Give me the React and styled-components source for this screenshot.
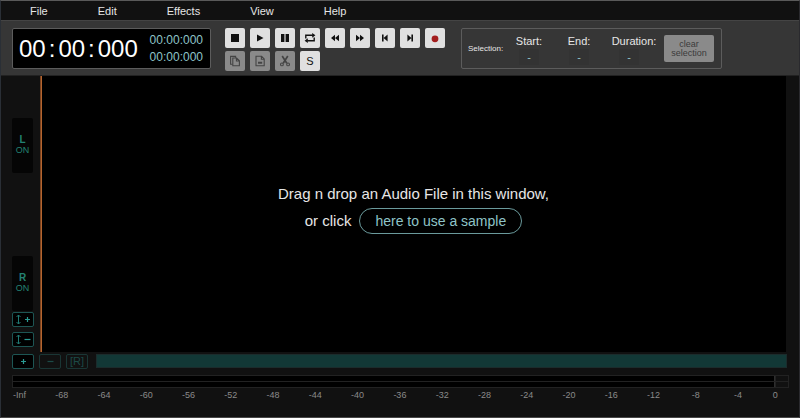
import React from "react";
import styled, { createGlobalStyle } from "styled-components";

const colors = {
  black: "#000",
  panel: "#111",
  toolbar: "#363636",
  edge: "#5c5c5c",
  text: "#e6e6e6",
  aqua: "#8fc4c8",
  teal: "#238272",
  tealEdge: "#1d5553",
  wave: "#123836",
  cursor: "#b5652f",
  key: "#e0e0e0",
  keyOff: "#8a8a8a",
};

const GlobalStyle = createGlobalStyle`
  * {
    box-sizing: border-box;
  }

  body {
    margin: 0;
    background: ${colors.panel};
    color: ${colors.text};
    font-family: "Liberation Sans", Arial, sans-serif;
    font-size: 11px;
  }

  button {
    border: none;
    cursor: pointer;
    font-family: inherit;
    padding: 0;
  }
`;

const Editor = styled.div`
  border: 1px solid #484848;
  border-left-color: #2a2f36;
  border-right-color: #2a2a2e;
  border-top-color: #5a5a5a;
  display: flex;
  flex-direction: column;
  min-height: 100vh;
`;

const MenuBar = styled.nav`
  display: flex;
  height: 19px;
  padding: 0 4px;
`;

const MenuButton = styled.button`
  background: none;
  color: ${colors.text};
  font-size: 11px;
  padding: 0 25px;
`;

const Toolbar = styled.header`
  align-items: flex-start;
  background: ${colors.toolbar};
  border-bottom: 1px solid #222;
  border-top: 1px solid #444;
  display: flex;
  height: 56px;
  padding: 7px 11px 0;
`;

const Clock = styled.div`
  align-items: center;
  background: ${colors.black};
  border: 1px solid ${colors.edge};
  border-radius: 2px;
  display: flex;
  height: 41px;
  justify-content: space-between;
  padding: 0 7px 0 6px;
  width: 199px;
`;

const BigTime = styled.div`
  color: #fff;
  display: flex;
  font-size: 24px;
  gap: 3px;
  line-height: 36px;
`;

const SmallTimes = styled.div`
  color: ${colors.aqua};
  font-size: 12px;
  line-height: 17px;
`;

const Keys = styled.div`
  display: grid;
  gap: 3px 5px;
  grid-template-columns: repeat(9, 20px);
  margin-left: 14px;
`;

const Key = styled.button`
  align-items: center;
  background: ${colors.key};
  border-radius: 2px;
  color: #111;
  display: flex;
  font-size: 11px;
  height: 20px;
  justify-content: center;

  &:disabled {
    background: ${colors.keyOff};
    color: #444;
  }
`;

const Selection = styled.section`
  align-items: center;
  border: 1px solid ${colors.edge};
  border-radius: 2px;
  display: flex;
  height: 41px;
  margin-left: 16px;
  padding: 0 7px 0 6px;
`;

const SelectionTitle = styled.span`
  font-size: 8px;
  width: 36px;
`;

const Readout = styled.label`
  align-items: center;
  display: flex;
  flex-direction: column;
  line-height: 16px;
  width: 50px;

  &:last-of-type {
    width: 60px;

    output {
      margin-right: 10px;
    }
  }
`;

const Value = styled.output`
  background: #333;
  color: ${colors.aqua};
  text-align: center;
  width: 20px;
`;

const ClearButton = styled.button`
  background: ${colors.keyOff};
  border-radius: 2px;
  color: #3a3a3a;
  font-size: 9px;
  height: 27px;
  line-height: 9px;
  width: 50px;

  span {
    display: block;
  }
`;

const Main = styled.main`
  display: flex;
  flex: 1;
  padding-right: 13px;
`;

const Channels = styled.aside`
  display: flex;
  flex-direction: column;
  padding-left: 11px;
  width: 39px;
`;

const Channel = styled.div`
  display: grid;
  flex: 1;
  grid-template-rows: 1fr 55px 1fr;
`;

const ChannelButton = styled.button`
  background: #050505;
  border-radius: 2px;
  color: ${colors.teal};
  font-size: 9px;
  grid-row: 2;
  line-height: 11px;
  width: 21px;
`;

const ChannelName = styled.span`
  display: block;
  font-size: 10px;
  font-weight: bold;
`;

const ZoomStack = styled.div`
  display: flex;
  flex-direction: column;
  gap: 5px;
  grid-row: 3;
  padding-top: 1px;
`;

const ZoomButton = styled.button`
  align-items: center;
  background: ${colors.black};
  border: 1px solid ${colors.tealEdge};
  border-radius: 2px;
  color: #2a9a92;
  display: flex;
  font-size: 11px;
  gap: 2px;
  height: 15px;
  justify-content: center;
  line-height: 11px;
  width: 22px;

  &:disabled {
    background: none;
    border-color: #1a3635;
    color: #1c4a47;
  }
`;

const Canvas = styled.section`
  align-items: center;
  background: ${colors.black};
  border-left: 1px solid #7a4320;
  box-shadow: inset 1px 0 ${colors.cursor};
  display: flex;
  flex: 1;
  flex-direction: column;
  font-size: 15px;
  justify-content: center;
  line-height: 27px;
  padding-bottom: 14px;
`;

const DropLine = styled.div`
  align-items: center;
  display: flex;
  gap: 8px;
`;

const SampleButton = styled.button`
  background: none;
  border: 1px solid #6a9a9c;
  border-radius: 13px;
  color: ${colors.aqua};
  font-size: 14px;
  height: 26px;
  padding: 0 15px;
`;

const Footer = styled.footer`
  padding: 2px 10px 17px 11px;
`;

const Timeline = styled.div`
  display: flex;
  gap: 5px;
`;

const Scrollbar = styled.div`
  background: ${colors.wave};
  border: 1px solid #1b2c2c;
  flex: 1;
  height: 14px;
  margin: 0 2px 0 3px;
`;

const Meter = styled.div`
  background: #222;
  display: grid;
  gap: 1px;
  grid-template-columns: 1fr 12px;
  margin-top: 6px;
  padding: 1px;
`;

const Level = styled.div`
  background: ${colors.black};
  border-right: 1px solid #2e2e2e;
  height: 5px;
`;

const Clip = styled.div`
  background: ${colors.panel};
  height: 5px;
`;

const Scale = styled.div`
  color: #8a8a8a;
  display: flex;
  font-size: 9px;
  justify-content: space-between;
  line-height: 10px;
  margin: 2px 11px 0 0;
`;

const Tick = styled.span`
  text-align: center;
  width: 15px;

  &:last-child {
    width: 5px;
  }
`;

const Icon = ({ children }) => (
  <svg width="12" height="12" viewBox="0 0 12 12" fill="currentColor" aria-hidden="true">
    {children}
  </svg>
);

const line = { fill: "none", stroke: "currentColor", strokeWidth: 1.1 };

const icons = {
  stop: <path d="M2 2h8v8H2z" />,
  play: <path d="M3 2.5L9.5 6 3 9.5z" />,
  pause: <path d="M2 2h3.4v8H2zM6.6 2H10v8H6.6z" />,
  loop: (
    <>
      <path {...line} strokeWidth="1.4" d="M1.8 6.6V3.3h7M10.2 5.4v3.3h-7" />
      <path d="M8.2.9l3.2 2.4-3.2 2.4zM3.8 6.3L.6 8.7l3.2 2.4z" />
    </>
  ),
  rewind: <path d="M6 2.7v6.6L2 6zM10 2.7v6.6L6 6z" />,
  forward: <path d="M2 2.7v6.6L6 6zM6 2.7v6.6L10 6z" />,
  start: <path d="M3 2.4h1.6v7.2H3zM8.6 2.4v7.2L4.6 6z" />,
  end: <path d="M7.4 2.4H9v7.2H7.4zM3.4 2.4v7.2l4-3.6z" />,
  record: <circle cx="6" cy="6.8" r="3.4" fill="#a31d1d" />,
  copy: (
    <>
      <path {...line} d="M3.6 9.2H1.6V1.4h5v1.4" />
      <path {...line} d="M3.8 3h3.8l2.8 2.8v5H3.8zM7.4 3.2V6h2.8" />
    </>
  ),
  paste: <path {...line} d="M2 1.2h5.6L10.2 4v6.8H2zM7.4 1.4v2.8h2.6M4 7.2h4.2M4 8.2h4.2" />,
  cut: (
    <g {...line}>
      <path d="M3.2 1l4.6 7.2M8.8 1L4.2 8.2" strokeWidth="1.7" />
      <circle cx="2.9" cy="9.4" r="1.4" />
      <circle cx="9.1" cy="9.4" r="1.4" />
    </g>
  ),
};

const menus = ["File", "Edit", "Effects", "View", "Help"];

const transport = ["stop", "play", "pause", "loop", "rewind", "forward", "start", "end", "record"];

const clipboard = ["copy", "paste", "cut"];

const ticks = ["-Inf"];
for (let db = -68; db <= 0; db += 4) {
  ticks.push(String(db));
}

const VerticalArrow = () => (
  <svg width="7" height="11" viewBox="0 0 7 11" fill="none" stroke="#1f7a74" aria-hidden="true">
    <path d="M3.5 1v9M1.5 3l2-2 2 2M1.5 8l2 2 2-2" />
  </svg>
);

const Sign = ({ plus }) => (
  <svg width="7" height="7" viewBox="0 0 7 7" fill="none" stroke="currentColor" strokeWidth="1.2" aria-hidden="true">
    <path d={plus ? "M1 3.5h5M3.5 1v5" : "M0.5 3.5h6"} />
  </svg>
);

const App = () => (
  <>
    <GlobalStyle />
    <Editor>
      <MenuBar>
        {menus.map((name) => (
          <MenuButton key={name}>{name}</MenuButton>
        ))}
      </MenuBar>
      <Toolbar>
        <Clock>
          <BigTime>
            <span>00</span>
            <span>:</span>
            <span>00</span>
            <span>:</span>
            <span>000</span>
          </BigTime>
          <SmallTimes>
            <div>00:00:000</div>
            <div>00:00:000</div>
          </SmallTimes>
        </Clock>
        <Keys>
          {transport.map((name) => (
            <Key key={name} aria-label={name}>
              <Icon>{icons[name]}</Icon>
            </Key>
          ))}
          {clipboard.map((name) => (
            <Key key={name} aria-label={name} disabled>
              <Icon>{icons[name]}</Icon>
            </Key>
          ))}
          <Key>S</Key>
        </Keys>
        <Selection>
          <SelectionTitle>Selection:</SelectionTitle>
          <Readout>
            Start:
            <Value>-</Value>
          </Readout>
          <Readout>
            End:
            <Value>-</Value>
          </Readout>
          <Readout>
            Duration:
            <Value>-</Value>
          </Readout>
          <ClearButton disabled>
            <span>clear</span>
            <span>selection</span>
          </ClearButton>
        </Selection>
      </Toolbar>
      <Main>
        <Channels>
          <Channel>
            <ChannelButton>
              <ChannelName>L</ChannelName>
              ON
            </ChannelButton>
          </Channel>
          <Channel>
            <ChannelButton>
              <ChannelName>R</ChannelName>
              ON
            </ChannelButton>
            <ZoomStack>
              <ZoomButton aria-label="Zoom in vertically">
                <VerticalArrow />
                <Sign plus />
              </ZoomButton>
              <ZoomButton aria-label="Zoom out vertically">
                <VerticalArrow />
                <Sign />
              </ZoomButton>
            </ZoomStack>
          </Channel>
        </Channels>
        <Canvas>
          <div>Drag n drop an Audio File in this window,</div>
          <DropLine>
            or click
            <SampleButton>here to use a sample</SampleButton>
          </DropLine>
        </Canvas>
      </Main>
      <Footer>
        <Timeline>
          <ZoomButton aria-label="Zoom in">
            <Sign plus />
          </ZoomButton>
          <ZoomButton aria-label="Zoom out" disabled>
            <Sign />
          </ZoomButton>
          <ZoomButton aria-label="Reset zoom" disabled>
            [R]
          </ZoomButton>
          <Scrollbar />
        </Timeline>
        <Meter>
          <Level />
          <Clip />
          <Level />
          <Clip />
        </Meter>
        <Scale>
          {ticks.map((tick) => (
            <Tick key={tick}>{tick}</Tick>
          ))}
        </Scale>
      </Footer>
    </Editor>
  </>
);

export default App;
